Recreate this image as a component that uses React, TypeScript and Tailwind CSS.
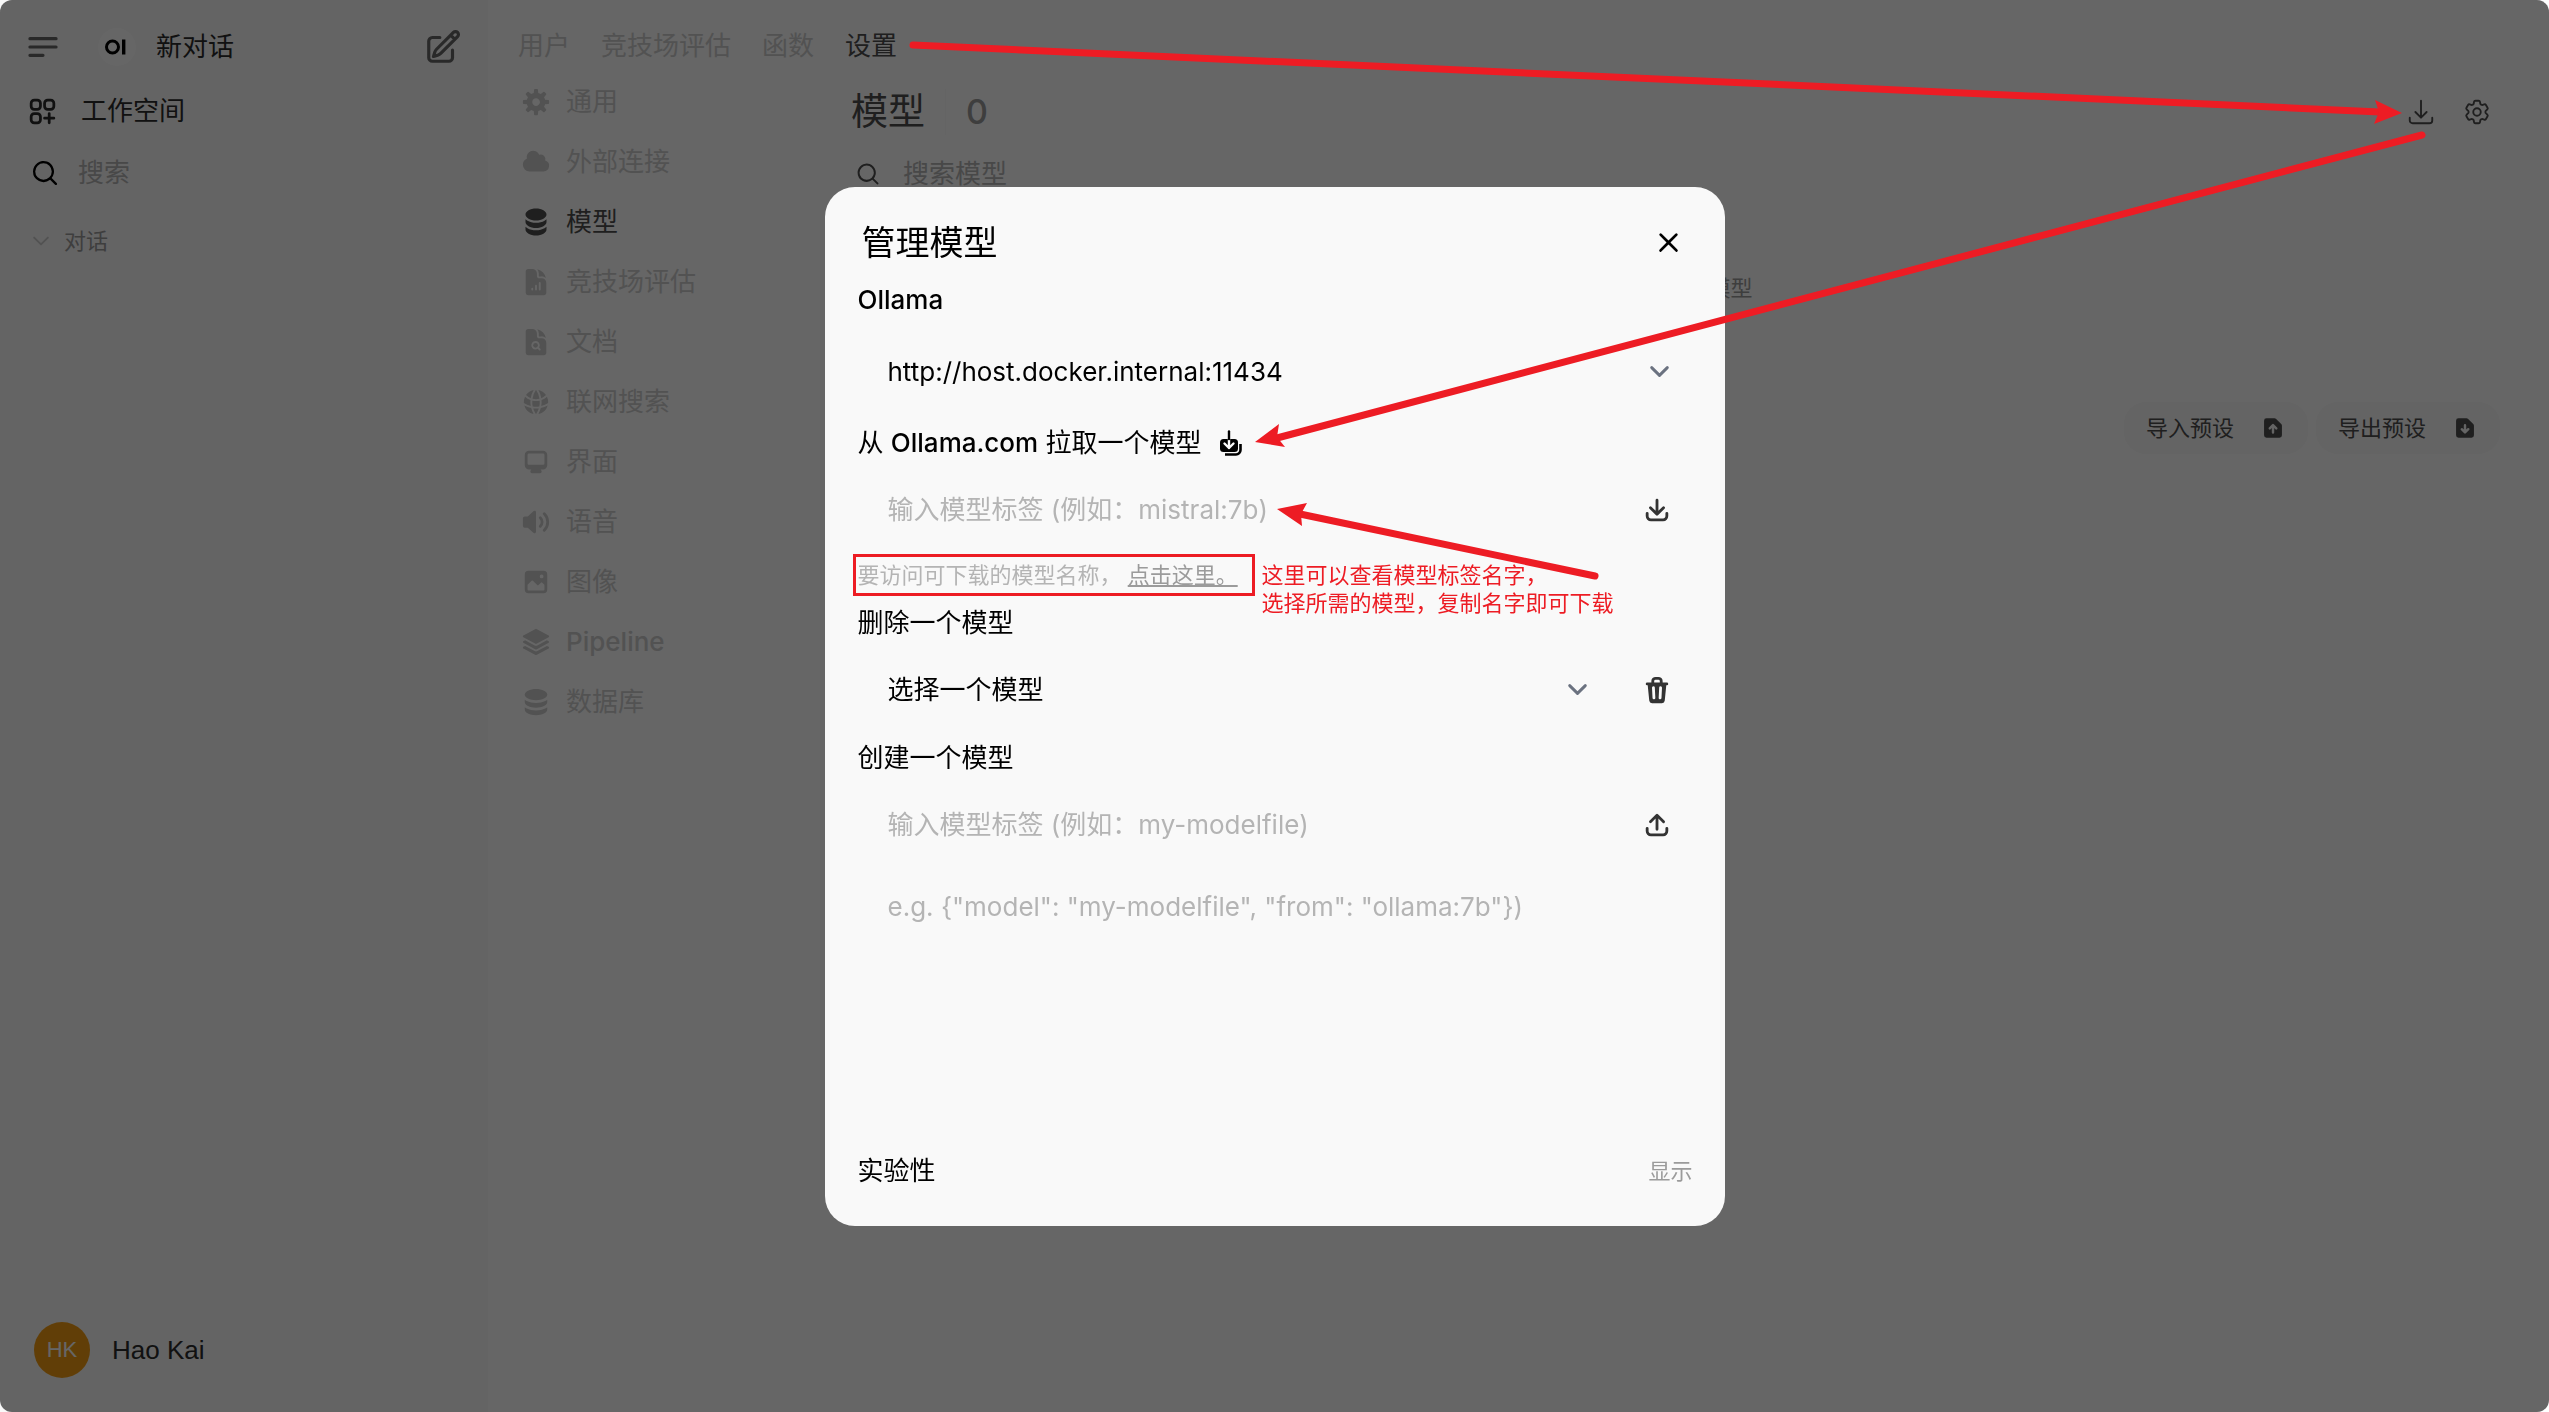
import { useState } from 'react';
import type { ReactNode } from 'react';
import {
  HiDocumentChartBar,
  HiDocumentMagnifyingGlass,
  HiGlobeAlt,
  HiMiniCircleStack,
  HiMiniMagnifyingGlass,
  HiMiniXMark,
  HiOutlineArrowDownTray,
  HiOutlineBars3BottomLeft,
  HiOutlineChevronDown,
  HiOutlineCog6Tooth,
  HiOutlinePencilSquare,
  HiOutlineSquaresPlus,
  HiSquare3Stack3D,
} from 'react-icons/hi2';

const TRAY = 'M3.5 9.75a.75.75 0 0 0-1.5 0v1.5A2.75 2.75 0 0 0 4.75 14h6.5A2.75 2.75 0 0 0 14 11.25v-1.5a.75.75 0 0 0-1.5 0v1.5c0 .69-.56 1.25-1.25 1.25h-6.5c-.69 0-1.25-.56-1.25-1.25v-1.5Z';
const SHEET = 'M4 2a1.5 1.5 0 0 0-1.5 1.5v9A1.5 1.5 0 0 0 4 14h8a1.5 1.5 0 0 0 1.5-1.5V6.621a1.5 1.5 0 0 0-.44-1.06L9.94 2.439A1.5 1.5 0 0 0 8.878 2H4Z';

// 16px solid icons
const paths = {
  cog: ['M6.955 1.45A.5.5 0 0 1 7.452 1h1.096a.5.5 0 0 1 .497.45l.17 1.699c.484.12.94.312 1.356.562l1.321-1.081a.5.5 0 0 1 .67.033l.774.775a.5.5 0 0 1 .034.67l-1.08 1.32c.25.417.44.873.561 1.357l1.699.17a.5.5 0 0 1 .45.497v1.096a.5.5 0 0 1-.45.497l-1.699.17c-.12.484-.312.94-.562 1.356l1.082 1.322a.5.5 0 0 1-.034.67l-.774.774a.5.5 0 0 1-.67.033l-1.322-1.08c-.416.25-.872.44-1.356.561l-.17 1.699a.5.5 0 0 1-.497.45H7.452a.5.5 0 0 1-.497-.45l-.17-1.699a4.973 4.973 0 0 1-1.356-.562L4.108 13.37a.5.5 0 0 1-.67-.033l-.774-.775a.5.5 0 0 1-.034-.67l1.08-1.32a4.971 4.971 0 0 1-.561-1.357l-1.699-.17A.5.5 0 0 1 1 8.548V7.452a.5.5 0 0 1 .45-.497l1.699-.17c.12-.484.312-.94.562-1.356L2.629 4.107a.5.5 0 0 1 .034-.67l.774-.774a.5.5 0 0 1 .67-.033L5.43 3.71a4.97 4.97 0 0 1 1.356-.561l.17-1.699ZM6 8c0 .538.212 1.026.558 1.385l.057.057a2 2 0 0 0 2.828-2.828l-.058-.056A2 2 0 0 0 6 8Z'],
  cloud: ['M1 9.5A3.5 3.5 0 0 0 4.5 13H12a3 3 0 0 0 .917-5.857 2.503 2.503 0 0 0-3.198-3.019 3.5 3.5 0 0 0-6.628 2.171A3.5 3.5 0 0 0 1 9.5Z'],
  monitor: ['M2 4.25A2.25 2.25 0 0 1 4.25 2h7.5A2.25 2.25 0 0 1 14 4.25v5.5A2.25 2.25 0 0 1 11.75 12h-1.312c.1.128.21.248.328.36a.75.75 0 0 1 .234.545v.345a.75.75 0 0 1-.75.75h-4.5a.75.75 0 0 1-.75-.75v-.345a.75.75 0 0 1 .234-.545c.118-.111.228-.232.328-.36H4.25A2.25 2.25 0 0 1 2 9.75v-5.5Zm2.25-.75a.75.75 0 0 0-.75.75v4.5c0 .414.336.75.75.75h7.5a.75.75 0 0 0 .75-.75v-4.5a.75.75 0 0 0-.75-.75h-7.5Z'],
  speaker: [
    'M7.557 2.066A.75.75 0 0 1 8 2.75v10.5a.75.75 0 0 1-1.248.56L3.59 11H2a1 1 0 0 1-1-1V6a1 1 0 0 1 1-1h1.59l3.162-2.81a.75.75 0 0 1 .805-.124ZM12.95 3.05a.75.75 0 1 0-1.06 1.06 5.5 5.5 0 0 1 0 7.78.75.75 0 1 0 1.06 1.06 7 7 0 0 0 0-9.9Z',
    'M10.828 5.172a.75.75 0 1 0-1.06 1.06 2.5 2.5 0 0 1 0 3.536.75.75 0 1 0 1.06 1.06 4 4 0 0 0 0-5.656Z',
  ],
  photo: ['M2 4a2 2 0 0 1 2-2h8a2 2 0 0 1 2 2v8a2 2 0 0 1-2 2H4a2 2 0 0 1-2-2V4Zm10.5 5.707a.5.5 0 0 0-.146-.353l-1-1a.5.5 0 0 0-.708 0L9.354 9.646a.5.5 0 0 1-.708 0L6.354 7.354a.5.5 0 0 0-.708 0l-2 2a.5.5 0 0 0-.146.353V12a.5.5 0 0 0 .5.5h8a.5.5 0 0 0 .5-.5V9.707ZM12 5a1 1 0 1 1-2 0 1 1 0 0 1 2 0Z'],
  database: [
    'M8 7c3.314 0 6-1.343 6-3s-2.686-3-6-3-6 1.343-6 3 2.686 3 6 3Z',
    'M8 8.5c1.84 0 3.579-.37 4.914-1.037A6.33 6.33 0 0 0 14 6.78V8c0 1.657-2.686 3-6 3S2 9.657 2 8V6.78c.346.273.72.5 1.087.683C4.42 8.131 6.16 8.5 8 8.5Z',
    'M8 12.5c1.84 0 3.579-.37 4.914-1.037.366-.183.74-.41 1.086-.684V12c0 1.657-2.686 3-6 3s-6-1.343-6-3v-1.22c.346.273.72.5 1.087.683C4.42 12.131 6.16 12.5 8 12.5Z',
  ],
  sheetUp: [SHEET + 'm4 9.5a.75.75 0 0 1-.75-.75V8.06l-.72.72a.75.75 0 0 1-1.06-1.06l2-2a.75.75 0 0 1 1.06 0l2 2a.75.75 0 1 1-1.06 1.06l-.72-.72v2.69a.75.75 0 0 1-.75.75Z'],
  sheetDown: [SHEET + 'm4 3.5a.75.75 0 0 1 .75.75v2.69l.72-.72a.75.75 0 1 1 1.06 1.06l-2 2a.75.75 0 0 1-1.06 0l-2-2a.75.75 0 0 1 1.06-1.06l.72.72V6.25A.75.75 0 0 1 8 5.5Z'],
  download: ['M8.75 2.75a.75.75 0 0 0-1.5 0v5.69L5.03 6.22a.75.75 0 0 0-1.06 1.06l3.5 3.5a.75.75 0 0 0 1.06 0l3.5-3.5a.75.75 0 0 0-1.06-1.06L8.75 8.44V2.75Z', TRAY],
  upload: ['M7.25 10.25a.75.75 0 0 0 1.5 0V4.56l2.22 2.22a.75.75 0 1 0 1.06-1.06l-3.5-3.5a.75.75 0 0 0-1.06 0l-3.5 3.5a.75.75 0 0 0 1.06 1.06l2.22-2.22v5.69Z', TRAY],
  trash: ['M5 3.25V4H2.75a.75.75 0 0 0 0 1.5h.3l.815 8.15A1.5 1.5 0 0 0 5.357 15h5.285a1.5 1.5 0 0 0 1.493-1.35l.815-8.15h.3a.75.75 0 0 0 0-1.5H11v-.75A2.25 2.25 0 0 0 8.75 1h-1.5A2.25 2.25 0 0 0 5 3.25Zm2.25-.75a.75.75 0 0 0-.75.75V4h3v-.75a.75.75 0 0 0-.75-.75h-1.5ZM6.05 6a.75.75 0 0 1 .787.713l.275 5.5a.75.75 0 0 1-1.498.075l-.275-5.5A.75.75 0 0 1 6.05 6Zm3.9 0a.75.75 0 0 1 .712.787l-.275 5.5a.75.75 0 0 1-1.498-.075l.275-5.5a.75.75 0 0 1 .786-.711Z'],
};

function Icon({ name, className }: { name: keyof typeof paths; className: string }) {
  return (
    <svg viewBox="0 0 16 16" fill="currentColor" className={className} aria-hidden="true">
      {paths[name].map((d) => (
        <path key={d} fillRule="evenodd" clipRule="evenodd" d={d} />
      ))}
    </svg>
  );
}

function PullAllIcon() {
  return (
    <svg viewBox="0 0 22 26" fill="none" className="h-[26px] w-[22px]" aria-hidden="true">
      <rect y="9" width="18" height="13" rx="3.5" fill="#000" />
      <path d="M5 24.5h11a4.5 4.5 0 0 0 4.5-4.5v-6" stroke="#000" strokeWidth="2.6" />
      <path d="M9 8v10M4.5 13.5 9 18l4.5-4.5" stroke="#f9f9f9" strokeWidth="2.4" strokeLinecap="round" strokeLinejoin="round" />
      <path d="M9 1.5V9" stroke="#000" strokeWidth="2.4" strokeLinecap="round" />
    </svg>
  );
}

const tabs = ['用户', '竞技场评估', '函数', '设置'];

const sections: { label: string; icon: ReactNode }[] = [
  { label: '通用', icon: <Icon name="cog" className="size-[30px]" /> },
  { label: '外部连接', icon: <Icon name="cloud" className="size-[30px]" /> },
  { label: '模型', icon: <HiMiniCircleStack className="size-[30px]" /> },
  { label: '竞技场评估', icon: <HiDocumentChartBar className="size-[30px]" /> },
  { label: '文档', icon: <HiDocumentMagnifyingGlass className="size-[30px]" /> },
  { label: '联网搜索', icon: <HiGlobeAlt className="size-[30px]" /> },
  { label: '界面', icon: <Icon name="monitor" className="size-[30px]" /> },
  { label: '语音', icon: <Icon name="speaker" className="size-[30px]" /> },
  { label: '图像', icon: <Icon name="photo" className="size-[30px]" /> },
  { label: 'Pipeline', icon: <HiSquare3Stack3D className="size-[30px]" /> },
  { label: '数据库', icon: <Icon name="database" className="size-[30px]" /> },
];

function Sidebar() {
  return (
    <aside className="flex w-[488px] shrink-0 flex-col bg-[#f9f9f9] pt-4 text-[#2b2b2b]">
      <div className="flex h-[62px] items-center pl-6 pr-[26px]">
        <button aria-label="菜单" className="text-[#676767]">
          <HiOutlineBars3BottomLeft strokeWidth={2} className="size-[38px]" />
        </button>
        <a href="#new" className="ml-9 flex flex-1 items-center gap-5">
          <svg viewBox="0 0 38 38" className="size-[38px]" aria-hidden="true">
            <circle cx="19" cy="19" r="19" fill="#fff" />
            <circle cx="14.5" cy="19" r="6" fill="none" stroke="#000" strokeWidth="3" />
            <rect x="24" y="11.5" width="3.4" height="15" fill="#000" />
          </svg>
          新对话
        </a>
        <button aria-label="新对话" className="text-[#676767]">
          <HiOutlinePencilSquare strokeWidth={2} className="size-[38px]" />
        </button>
      </div>
      <a href="#workspace" className="flex h-[66px] items-center gap-[22px] pl-[26px]">
        <HiOutlineSquaresPlus strokeWidth={2} className="size-[33px]" />
        工作空间
      </a>
      <label className="flex h-[58px] items-center gap-[18px] pl-[30px]">
        <HiMiniMagnifyingGlass className="size-[30px] text-black" />
        <input aria-label="搜索" placeholder="搜索" className="min-w-0 flex-1 bg-transparent outline-none placeholder:text-[#b4b4b4]" />
      </label>
      <button className="flex h-[78px] items-center gap-3 pl-[30px] text-[22px] text-[#9b9b9b]">
        <HiOutlineChevronDown strokeWidth={2} className="size-[22px] text-[#cdcdcd]" />
        对话
      </button>
      <button className="mb-[34px] mt-auto flex items-center gap-[22px] pl-[34px] font-['Liberation_Sans',Arial,sans-serif]">
        <span className="flex size-14 items-center justify-center rounded-full bg-[#f39c12] text-[22px] text-white">HK</span>
        Hao Kai
      </button>
    </aside>
  );
}

function ModelsPage() {
  return (
    <section className="min-w-0 flex-1">
      <div className="flex h-20 items-center justify-between pr-2">
        <h1 className="flex items-center text-[37px]">
          模型
          <span className="mx-5 h-[46px] w-px bg-[#f9f9f9]" />
          <span className="text-[34px] font-medium text-[#9b9b9b]">0</span>
        </h1>
        <div className="flex gap-[26px]">
          <button aria-label="管理模型">
            <HiOutlineArrowDownTray className="size-[30px]" />
          </button>
          <button aria-label="设置">
            <HiOutlineCog6Tooth className="size-[30px]" />
          </button>
        </div>
      </div>
      <label className="flex h-11 items-center gap-[22px] pl-1">
        <HiMiniMagnifyingGlass className="size-[26px]" />
        <input aria-label="搜索模型" placeholder="搜索模型" className="min-w-0 flex-1 bg-transparent outline-none placeholder:text-[#b4b4b4]" />
      </label>
      <p className="flex h-[184px] items-center justify-center text-[22px] text-[#9b9b9b]">未找到任何模型</p>
      <div className="mt-[22px] flex justify-end gap-2 text-[22px]">
        <button className="flex h-[52px] items-center gap-[26px] rounded-[22px] bg-[#f9f9f9] px-[22px]">
          导入预设
          <Icon name="sheetUp" className="size-[26px]" />
        </button>
        <button className="flex h-[52px] items-center gap-[26px] rounded-[22px] bg-[#f9f9f9] px-[22px]">
          导出预设
          <Icon name="sheetDown" className="size-[26px]" />
        </button>
      </div>
    </section>
  );
}

function SelectBox({ label, option }: { label: string; option: string }) {
  return (
    <div className="relative flex-1">
      <select aria-label={label} className="h-20 w-full appearance-none bg-transparent pl-[30px] pr-[60px] outline-none">
        <option>{option}</option>
      </select>
      <svg
        viewBox="0 0 20 20"
        fill="none"
        stroke="#6b7280"
        strokeWidth="1.5"
        strokeLinecap="round"
        strokeLinejoin="round"
        className="pointer-events-none absolute right-3.5 top-5 size-[39px]"
        aria-hidden="true"
      >
        <path d="M6 8l4 4 4-4" />
      </svg>
    </div>
  );
}

function ManageModels({ onClose }: { onClose: () => void }) {
  return (
    <div className="fixed inset-0 flex items-center justify-center overflow-hidden rounded-xl bg-black/60">
      <div role="dialog" aria-label="管理模型" className="w-[900px] rounded-[30px] bg-[#f9f9f9] pb-[30px] pl-[33px] pr-8 pt-[31px] text-black">
        <div className="flex h-[50px] items-center justify-between pl-1 pr-1.5">
          <h2 className="text-[34px]">管理模型</h2>
          <button aria-label="关闭" onClick={onClose}>
            <HiMiniXMark className="size-[37px]" />
          </button>
        </div>

        <h3 className="flex h-16 items-center font-medium">Ollama</h3>
        <SelectBox label="Ollama" option="http://host.docker.internal:11434" />

        {/* Pull */}
        <div className="flex h-[62px] items-center gap-[18px]">
          <label htmlFor="pull-tag">
            从 <span className="font-medium">Ollama.com</span> 拉取一个模型
          </label>
          <button aria-label="更新所有模型">
            <PullAllIcon />
          </button>
        </div>
        <div className="flex h-[72px] items-center gap-2.5">
          <input id="pull-tag" placeholder="输入模型标签 (例如：mistral:7b)" className="min-w-0 flex-1 bg-transparent pl-[30px] outline-none placeholder:text-[#b4b4b4]" />
          <button aria-label="下载" className="flex w-[72px] justify-center text-[#333]">
            <Icon name="download" className="size-[30px]" />
          </button>
        </div>
        <div className="relative -ml-[5px] mt-2 flex h-[42px] w-[402px] items-center whitespace-nowrap border-3 border-[#ed1c24] pl-0.5 text-[22px] text-[#b4b4b4]">
          <p>
            要访问可下载的模型名称，{' '}
            <a href="https://ollama.com/library" className="text-[#9b9b9b] underline">
              点击这里。
            </a>
          </p>
          <p className="absolute left-full top-1 ml-2.5 leading-7 text-[#ed1c24]">
            这里可以查看模型标签名字，
            <br />
            选择所需的模型，复制名字即可下载
          </p>
        </div>

        {/* Delete */}
        <h3 className="flex h-[54px] items-center">删除一个模型</h3>
        <div className="flex items-center gap-2.5">
          <SelectBox label="删除一个模型" option="选择一个模型" />
          <button aria-label="删除" className="flex w-[72px] justify-center text-[#333]">
            <Icon name="trash" className="size-[30px]" />
          </button>
        </div>

        {/* Create */}
        <h3 className="flex h-14 items-center">创建一个模型</h3>
        <div className="flex h-[78px] items-center gap-2.5">
          <input aria-label="创建一个模型" placeholder="输入模型标签 (例如：my-modelfile)" className="min-w-0 flex-1 bg-transparent pl-[30px] outline-none placeholder:text-[#b4b4b4]" />
          <button aria-label="上传" className="flex w-[72px] justify-center text-[#333]">
            <Icon name="upload" className="size-[30px]" />
          </button>
        </div>
        <textarea
          aria-label="Modelfile"
          placeholder={'e.g. {"model": "my-modelfile", "from": "ollama:7b"})'}
          className="block h-[282px] w-full resize-none bg-transparent py-6 pl-[30px] outline-none placeholder:text-[#b4b4b4]"
        />

        <div className="flex h-[50px] items-center justify-between">
          <h3>实验性</h3>
          <button className="text-[22px] text-[#9b9b9b]">显示</button>
        </div>
      </div>
    </div>
  );
}

// Hand-drawn pointers from step to step
function Arrows() {
  return (
    <svg viewBox="0 0 2549 1412" className="pointer-events-none fixed inset-0 h-full w-full" fill="#ed1c24" stroke="#ed1c24" aria-hidden="true">
      <g strokeWidth="7" strokeLinecap="round">
        <path d="M913 45 2380 112" />
        <path d="M2422 135 1277 438" />
        <path d="M1595 576 1300 514" />
      </g>
      <g stroke="none">
        <path d="M2402 113 2375 100 2379 112 2374 124Z" />
        <path d="M1255 442 1279 424 1277 437 1285 447Z" />
        <path d="M1277 509 1307 503 1301 514 1302 526Z" />
      </g>
    </svg>
  );
}

export default function App() {
  const [active, setActive] = useState('模型');
  const [open, setOpen] = useState(true);

  return (
    <div className="flex min-h-screen bg-white font-['Inter','Noto_Sans_CJK_SC',sans-serif] text-[26px] leading-[38px] text-[#4e4e4e]">
      <Sidebar />
      <main className="flex min-w-0 flex-1 flex-col pl-[30px] pr-[49px]">
        <nav className="flex h-[72px] items-center gap-[31px] pt-5">
          {tabs.map((tab) => (
            <a key={tab} href="#admin" className={tab === '设置' ? '' : 'text-[#cdcdcd]'}>
              {tab}
            </a>
          ))}
        </nav>
        <div className="flex flex-1">
          <nav className="flex w-[333px] shrink-0 flex-col pl-[3px]">
            {sections.map(({ label, icon }) => (
              <button
                key={label}
                onClick={() => setActive(label)}
                className={`flex h-[60px] items-center gap-[15px] ${label === 'Pipeline' ? 'font-medium' : ''} ${active === label ? '' : 'text-[#cdcdcd]'}`}
              >
                {icon}
                {label}
              </button>
            ))}
          </nav>
          <ModelsPage />
        </div>
      </main>
      {open && <ManageModels onClose={() => setOpen(false)} />}
      <Arrows />
    </div>
  );
}
